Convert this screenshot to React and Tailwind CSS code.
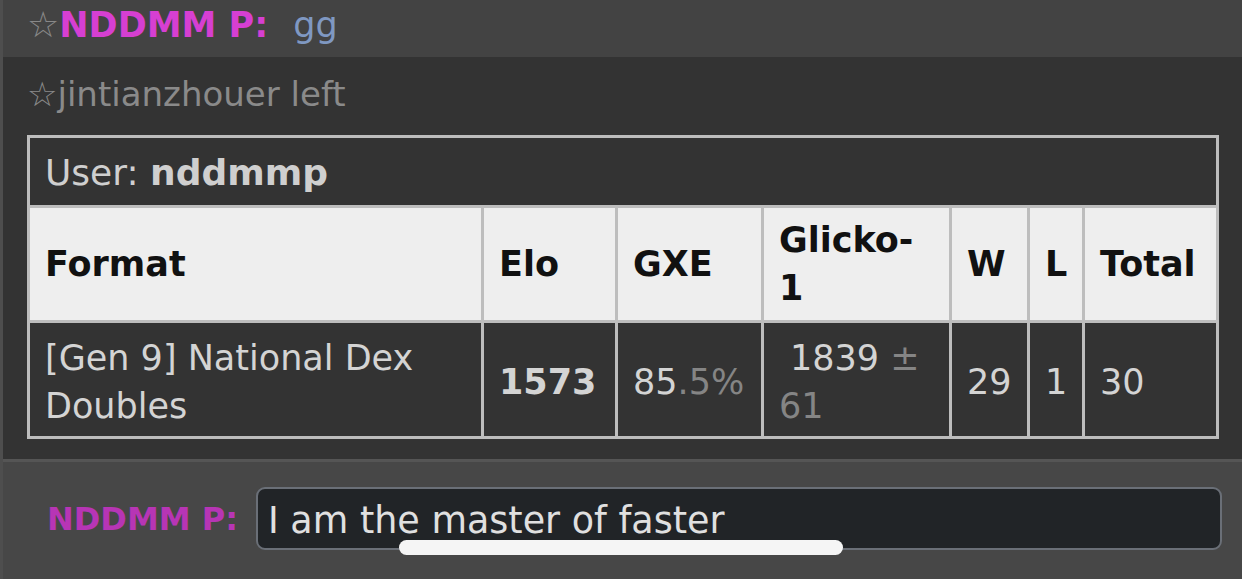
import React from "react";

export default function App() {
  const th = "border-[3px] border-[#bdbdbd] bg-[#eeeeee] text-[#111] font-bold text-left align-middle px-[15px] leading-[48px]";
  const td = "border-[3px] border-[#bdbdbd] text-[#d4d4d4] align-middle px-[15px] pt-[4px] leading-[48px]";
  return (
    <div className="relative w-[1242px] h-[579px] overflow-hidden flex bg-[#333] font-['DejaVu_Sans',sans-serif]">
      <div className="w-[3px] bg-[#4e4e4e] shrink-0" />
      <div className="flex-1 flex flex-col">
        {/* top message */}
        <div className="h-[57px] bg-[#434343] pl-[24px] shrink-0">
          <div className="text-[35px] leading-[50px] flex items-baseline">
            <span className="text-[#888] font-normal text-[36px]">☆</span>
            <span className="text-[#d63fd2] font-bold">NDDMM P:</span>
            <span className="text-[#7f98c2] ml-[25px]">gg</span>
          </div>
        </div>
        {/* main */}
        <div className="h-[402px] bg-[#333] pl-[24px] pt-[15px] shrink-0">
          <div className="text-[#8a8a8a] text-[34px] leading-[44px]">☆jintianzhouer left</div>
          <table className="mt-[19px] table-fixed border-collapse w-[1192px] text-[35px]">
            <colgroup>
              <col className="w-[454px]" />
              <col className="w-[134px]" />
              <col className="w-[146px]" />
              <col className="w-[188px]" />
              <col className="w-[78px]" />
              <col className="w-[55px]" />
              <col className="w-[134px]" />
            </colgroup>
            <tbody>
              <tr className="h-[70px]">
                <td colSpan={7} className="border-[3px] border-[#bdbdbd] px-[15px] pt-[3px] text-[#cfcfcf] align-middle leading-[48px] text-[36px]">
                  User: <b className="font-bold">nddmmp</b>
                </td>
              </tr>
              <tr className="h-[115px]">
                <th className={th}>Format</th>
                <th className={th}>Elo</th>
                <th className={th}>GXE</th>
                <th className={th}>Glicko-<br />1</th>
                <th className={th}>W</th>
                <th className={th}>L</th>
                <th className={th}>Total</th>
              </tr>
              <tr className="h-[116px]">
                <td className={td}>[Gen 9] National Dex<br />Doubles</td>
                <td className={td + " font-bold"}>1573</td>
                <td className={td}>85<span className="text-[#858585]">.5%</span></td>
                <td className={td}>
                  <span className="pl-[11px]">1839</span> <span className="text-[#858585]">±</span><br />
                  <span className="text-[#858585]">61</span>
                </td>
                <td className={td}>29</td>
                <td className={td}>1</td>
                <td className={td}>30</td>
              </tr>
            </tbody>
          </table>
        </div>
        <div className="h-[3px] bg-[#555] shrink-0" />
        {/* bottom compose bar */}
        <div className="flex-1 bg-[#474747] pt-[25px] pl-[44px] flex items-start">
          <div className="h-[63px] flex items-center text-[#b735b5] font-bold text-[32px] w-[209px] shrink-0">
            NDDMM P:
          </div>
          <div className="w-[966px] h-[63px] rounded-[9px] border-[2px] border-[#6a6f77] bg-[#212427] flex items-center pl-[10px] text-[#e0e0e0] text-[36.5px] pt-[6px]">
            I am the master of faster
          </div>
        </div>
      </div>
      <div className="absolute left-[399px] top-[540px] w-[444px] h-[15px] rounded-full bg-[#f5f5f5]" />
    </div>
  );
}
